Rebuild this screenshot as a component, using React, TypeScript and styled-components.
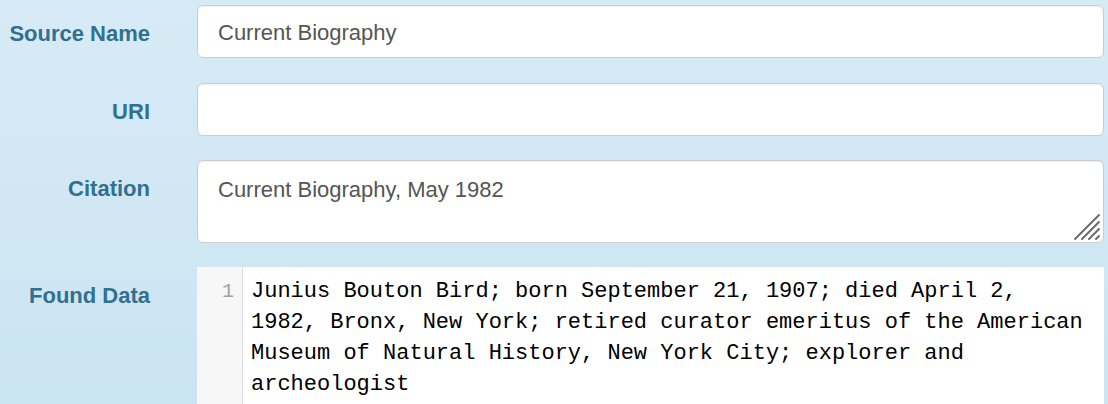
import React from "react";
import styled, { createGlobalStyle } from "styled-components";

const GlobalStyle = createGlobalStyle`
  html, body {
    margin: 0;
    padding: 0;
    background: #d3e8f4;
  }
  * {
    box-sizing: border-box;
  }
`;

const Panel = styled.div`
  width: 1108px;
  height: 404px;
  overflow: hidden;
  background: linear-gradient(to bottom, #d7ebf6 0%, #cbe4f2 100%);
  padding-top: 5px;
  font-family: "Liberation Sans", Arial, Helvetica, sans-serif;
`;

const Row = styled.div<{ gap: number }>`
  display: grid;
  grid-template-columns: 150px 907px;
  column-gap: 47px;
  margin-bottom: ${(p) => p.gap}px;
`;

const Label = styled.label`
  text-align: right;
  font-weight: bold;
  font-size: 22px;
  line-height: 26px;
  color: #31708f;
  padding-top: 16px;
`;

const TextInput = styled.input`
  width: 100%;
  height: 53px;
  padding: 3px 20px 0;
  font-family: "Liberation Sans", Arial, Helvetica, sans-serif;
  font-size: 22px;
  color: #555;
  background: #fff;
  border: 1px solid #ccc;
  border-radius: 6px;
  box-shadow: inset 0 1px 2px rgba(0, 0, 0, 0.06);
  outline: none;
`;

const AreaWrap = styled.div`
  position: relative;
  height: 83px;
`;

const TextArea = styled.textarea`
  display: block;
  width: 100%;
  height: 100%;
  padding: 15px 20px;
  font-family: "Liberation Sans", Arial, Helvetica, sans-serif;
  font-size: 22px;
  line-height: 28px;
  color: #555;
  background: #fff;
  border: 1px solid #ccc;
  border-radius: 6px;
  box-shadow: inset 0 1px 2px rgba(0, 0, 0, 0.06);
  resize: none;
  outline: none;
`;

const Grip = styled.svg`
  position: absolute;
  right: 3px;
  bottom: 2px;
`;

const Editor = styled.div`
  display: flex;
  height: 160px;
  background: #fff;
  font-family: "Liberation Mono", "Courier New", monospace;
  font-size: 22px;
  line-height: 31px;
`;

const Gutter = styled.div`
  width: 46px;
  flex: none;
  background: #f7f7f7;
  border-right: 1px solid #ddd;
  color: #a0a0a0;
  text-align: right;
  padding: 9px 8px 0 0;
  font-size: 20px;
`;

const Code = styled.pre`
  margin: 0;
  width: 846px;
  padding: 9px 0 0 8px;
  font: inherit;
  color: #000;
  white-space: pre-wrap;
  word-wrap: break-word;
`;

const foundText =
  "Junius Bouton Bird; born September 21, 1907; died April 2, 1982, Bronx, New York; retired curator emeritus of the American Museum of Natural History, New York City; explorer and archeologist";

export default function App() {
  return (
    <>
      <GlobalStyle />
      <Panel>
        <Row gap={25}>
          <Label>Source Name</Label>
          <TextInput defaultValue="Current Biography" />
        </Row>
        <Row gap={24}>
          <Label>URI</Label>
          <TextInput defaultValue="" />
        </Row>
        <Row gap={24}>
          <Label>Citation</Label>
          <AreaWrap>
            <TextArea defaultValue="Current Biography, May 1982" />
            <Grip width="28" height="28" viewBox="0 0 28 28">
              <g stroke="#6a6a6a" strokeWidth="2" strokeLinecap="round">
                <line x1="2" y1="26" x2="26" y2="2" />
                <line x1="9" y1="26" x2="26" y2="9" />
                <line x1="16" y1="26" x2="26" y2="16" />
                <line x1="23" y1="26" x2="26" y2="23" />
              </g>
            </Grip>
          </AreaWrap>
        </Row>
        <Row gap={0}>
          <Label>Found Data</Label>
          <Editor>
            <Gutter>1</Gutter>
            <Code>{foundText}</Code>
          </Editor>
        </Row>
      </Panel>
    </>
  );
}
